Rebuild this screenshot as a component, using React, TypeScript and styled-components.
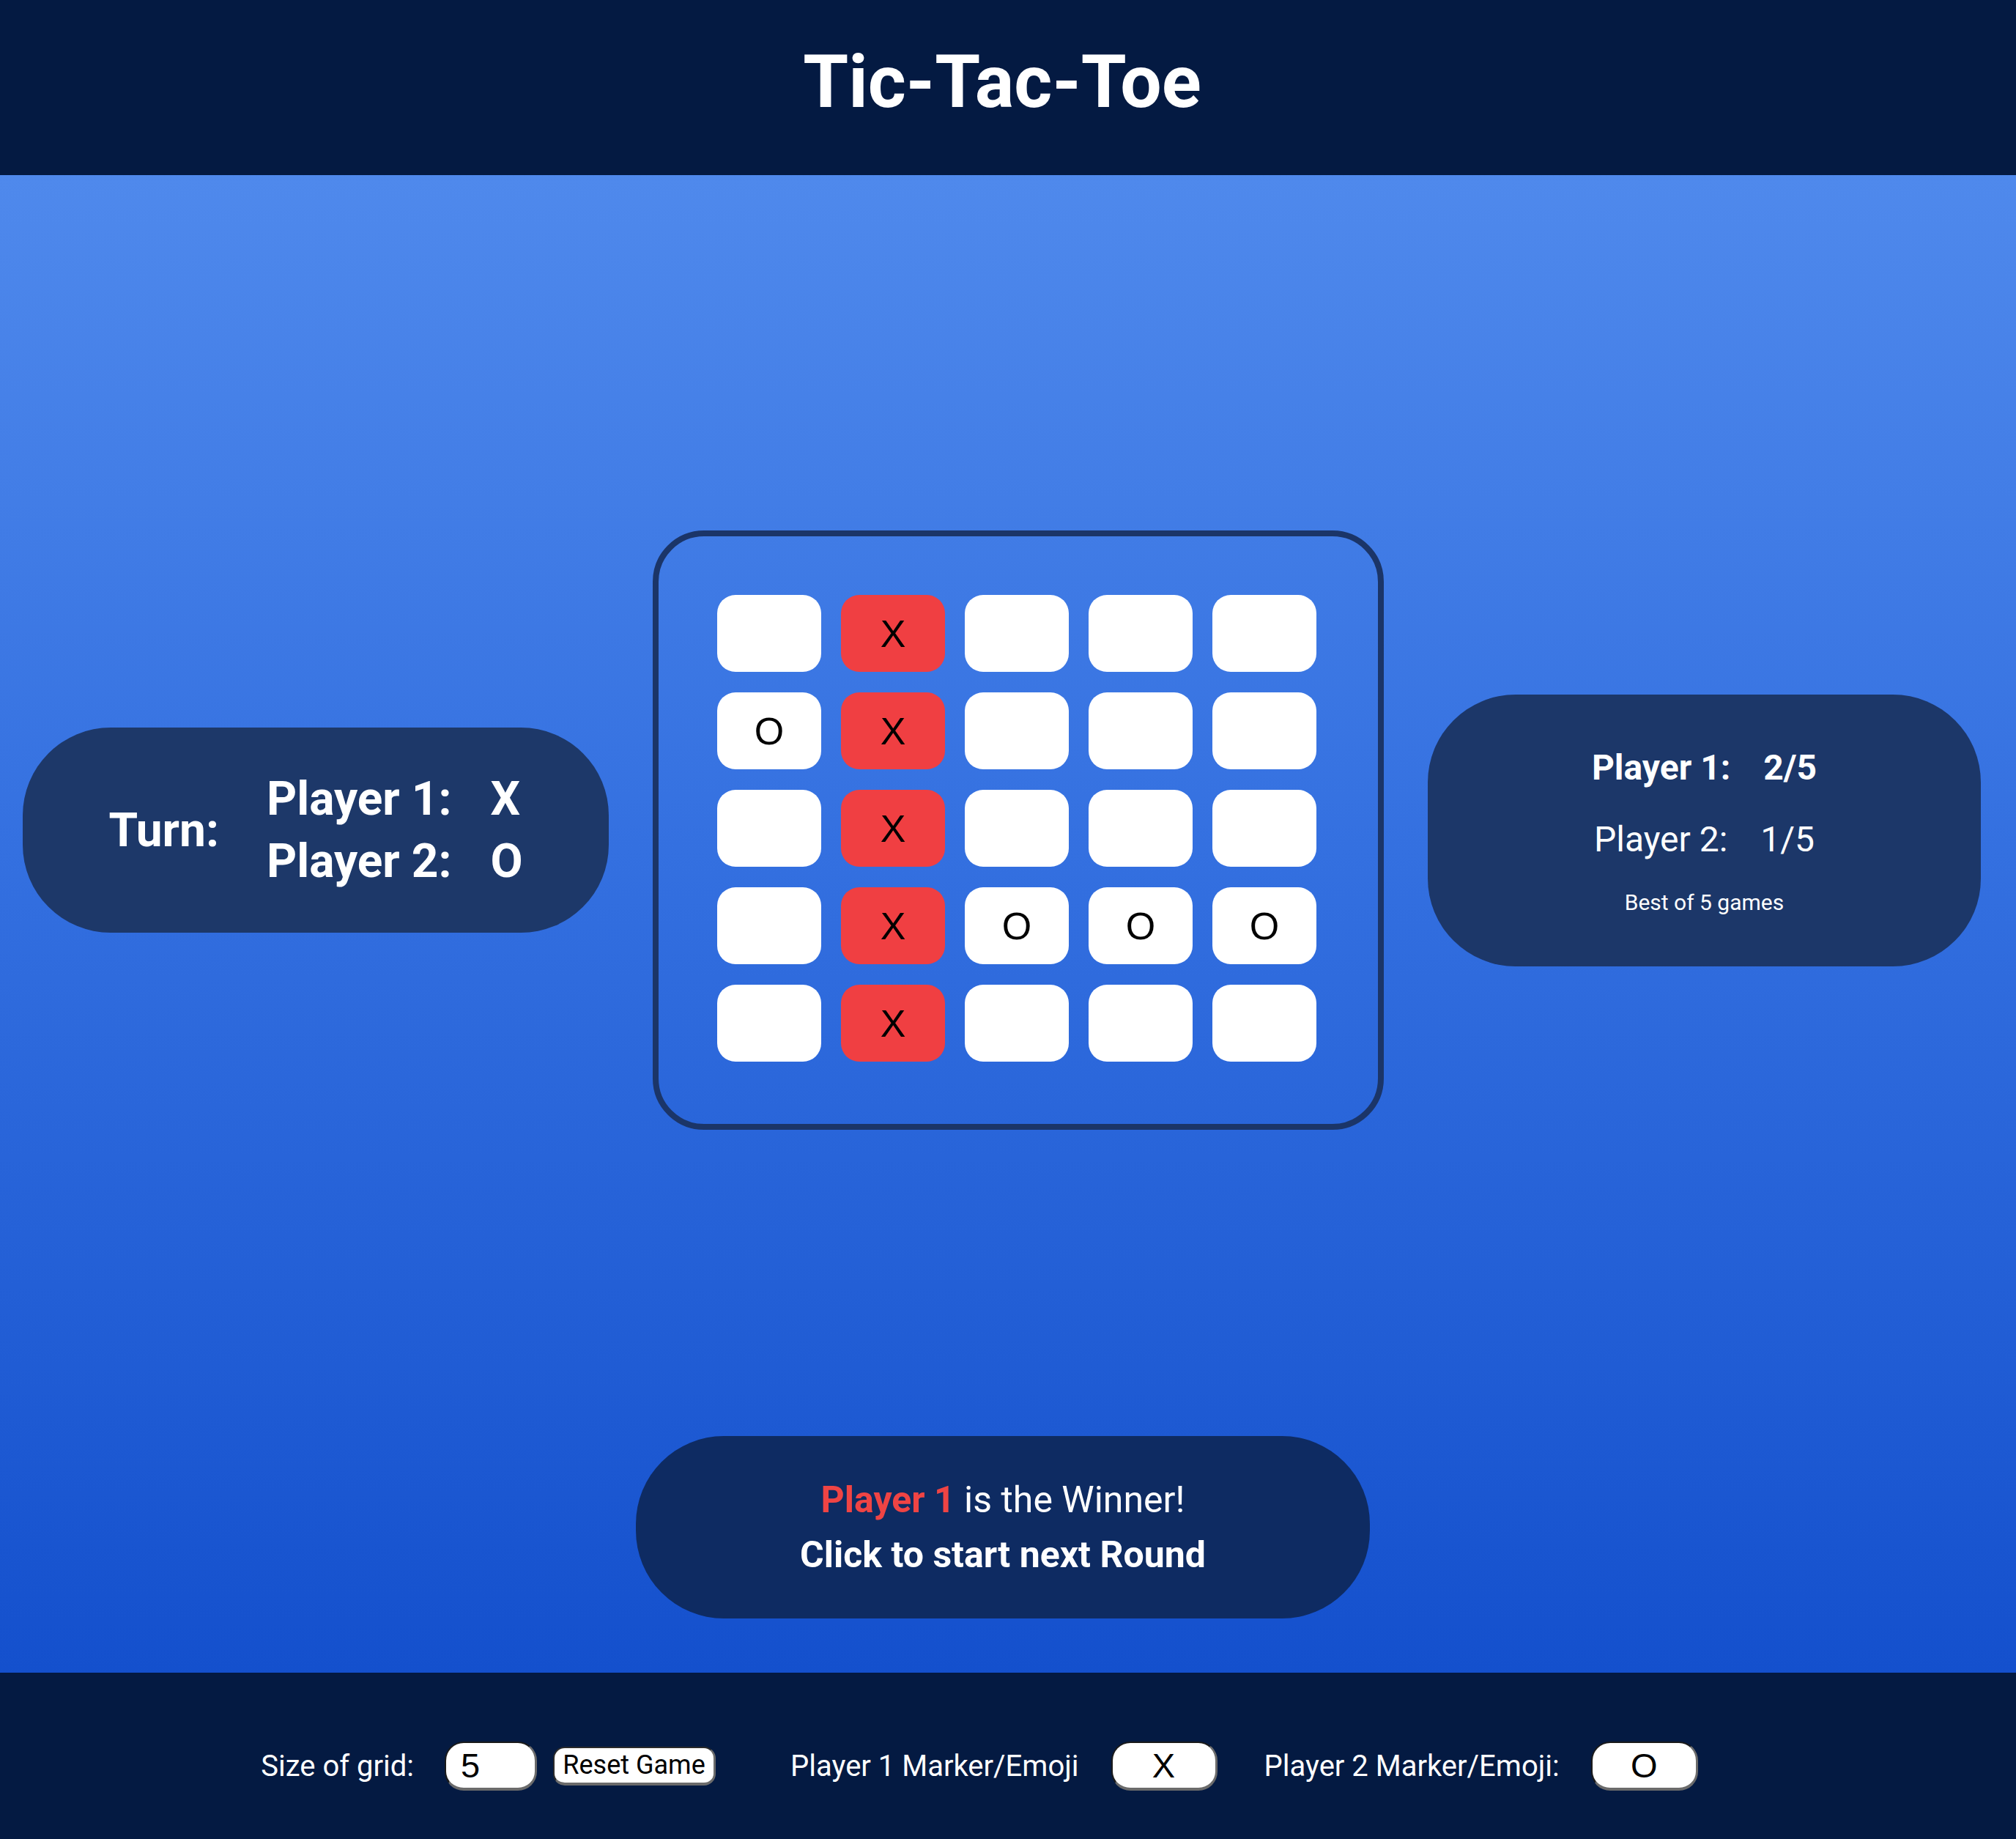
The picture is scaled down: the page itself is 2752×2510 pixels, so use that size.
import React from "react";
import styled, { createGlobalStyle } from "styled-components";

type Mark = "" | "X" | "O";

const board: Mark[][] = [
  ["", "X", "", "", ""],
  ["O", "X", "", "", ""],
  ["", "X", "", "", ""],
  ["", "X", "O", "O", "O"],
  ["", "X", "", "", ""],
];

const winningColumn = 1;

const GlobalStyle = createGlobalStyle`
  html, body {
    margin: 0;
    padding: 0;
  }

  body {
    font-family: Roboto, "Liberation Sans", sans-serif;
    color: #fff;
  }
`;

const Page = styled.div`
  display: flex;
  flex-direction: column;
  width: 2752px;
  height: 2510px;
`;

const Header = styled.header`
  height: 239px;
  box-sizing: border-box;
  padding: 0 16px 16px 0;
  background-color: #041a42;
  display: flex;
  align-items: center;
  justify-content: center;
`;

const Title = styled.h1`
  margin: 0;
  font-size: 100px;
  font-weight: 700;
  color: #fff;
`;

const Main = styled.main`
  height: 2044px;
  box-sizing: border-box;
  padding-top: 485px;
  background: linear-gradient(180deg, #4f89ec 0%, #3470e0 45%, #1450cd 100%);
  display: flex;
  flex-direction: column;
  align-items: center;
`;

const GameRow = styled.div`
  align-self: stretch;
  display: flex;
  align-items: center;
  gap: 60px;
  padding-left: 31px;
`;

const Panel = styled.div<{ $width: number; $height: number; $bg?: string }>`
  width: ${(p) => p.$width}px;
  height: ${(p) => p.$height}px;
  box-sizing: border-box;
  border-radius: 120px;
  background-color: ${(p) => p.$bg ?? "#1d3869"};
  display: flex;
  align-items: center;
  justify-content: center;
`;

const WinnerPanel = styled(Panel)`
  margin-top: 418px;
  margin-right: 14px;
`;

const TurnLabel = styled.div`
  font-size: 64px;
  font-weight: 700;
  margin-right: 65px;
`;

const TurnList = styled.div`
  display: grid;
  grid-template-columns: auto auto;
  column-gap: 53px;
  font-size: 64px;
  font-weight: 700;
  line-height: 85px;
`;

const Board = styled.div`
  width: 998px;
  height: 818px;
  box-sizing: border-box;
  border: 8px solid #1b3568;
  border-radius: 70px;
  padding: 80px 0 0 80px;
  display: grid;
  grid-template-columns: repeat(5, 142px);
  grid-auto-rows: 105px;
  column-gap: 27px;
  row-gap: 28px;
  align-content: start;
`;

const Cell = styled.div<{ $win: boolean }>`
  border-radius: 25px;
  background-color: ${(p) => (p.$win ? "#f03f42" : "#ffffff")};
  color: #000;
  font-family: "Liberation Sans", Arial, sans-serif;
  font-size: 52px;
  display: flex;
  align-items: center;
  justify-content: center;
`;

const ScoreBox = styled.div`
  display: flex;
  flex-direction: column;
  align-items: center;
`;

const ScoreLine = styled.div<{ $bold?: boolean }>`
  font-size: 48px;
  line-height: 98px;
  font-weight: ${(p) => (p.$bold ? 700 : 400)};
`;

const ScoreValue = styled.span`
  margin-left: 45px;
`;

const BestOf = styled.div`
  font-size: 30px;
  line-height: 73px;
`;

const WinnerBox = styled.div`
  text-align: center;
  font-size: 50px;
  line-height: 75px;
`;

const WinnerName = styled.span`
  color: #ef4444;
  font-weight: 700;
`;

const NextRound = styled.div`
  font-weight: 700;
`;

const Footer = styled.footer`
  height: 227px;
  box-sizing: border-box;
  padding: 27px 78px 0 0;
  background-color: #041a42;
  display: flex;
  align-items: center;
  justify-content: center;
`;

const Group = styled.div<{ $gap: number; $after?: number }>`
  display: flex;
  align-items: center;
  gap: ${(p) => p.$gap}px;
  margin-right: ${(p) => p.$after ?? 0}px;
`;

const Label = styled.label`
  font-size: 40px;
  color: #fff;
`;

const TextInput = styled.input<{ $width: number; $center?: boolean }>`
  width: ${(p) => p.$width}px;
  height: 67px;
  box-sizing: border-box;
  padding: 0 ${(p) => (p.$center ? 0 : 20)}px;
  border-style: solid;
  border-width: 2px 3px 4px 2px;
  border-color: #1a1a1a #6b6b6b #6b6b6b #1a1a1a;
  border-radius: 26px;
  background: #fff;
  color: #000;
  font-family: "Liberation Sans", Arial, sans-serif;
  font-size: 47px;
  text-align: ${(p) => (p.$center ? "center" : "left")};
  outline: none;
`;

const ResetButton = styled.button`
  width: 222px;
  height: 53px;
  box-sizing: border-box;
  padding: 0;
  border-style: solid;
  border-width: 2px 3px 4px 2px;
  border-color: #2a2a2a #6b6b6b #6b6b6b #2a2a2a;
  border-radius: 16px;
  background: #fff;
  color: #000;
  font-family: Roboto, sans-serif;
  font-size: 36px;
  cursor: pointer;
`;

const App: React.FC = () => {
  return (
    <Page>
      <GlobalStyle />
      <Header>
        <Title>Tic-Tac-Toe</Title>
      </Header>
      <Main>
        <GameRow>
          <Panel $width={800} $height={280}>
            <TurnLabel>Turn:</TurnLabel>
            <TurnList>
              <span>Player 1:</span>
              <span>X</span>
              <span>Player 2:</span>
              <span>O</span>
            </TurnList>
          </Panel>
          <Board>
            {board.map((row, r) =>
              row.map((mark, c) => (
                <Cell key={`${r}-${c}`} $win={c === winningColumn}>
                  {mark}
                </Cell>
              ))
            )}
          </Board>
          <Panel $width={755} $height={371} $bg="#1c3769">
            <ScoreBox>
              <ScoreLine $bold>
                Player 1:<ScoreValue>2/5</ScoreValue>
              </ScoreLine>
              <ScoreLine>
                Player 2:<ScoreValue>1/5</ScoreValue>
              </ScoreLine>
              <BestOf>Best of 5 games</BestOf>
            </ScoreBox>
          </Panel>
        </GameRow>
        <WinnerPanel $width={1002} $height={249} $bg="#0e2b62">
          <WinnerBox>
            <div>
              <WinnerName>Player 1</WinnerName> is the Winner!
            </div>
            <NextRound>Click to start next Round</NextRound>
          </WinnerBox>
        </WinnerPanel>
      </Main>
      <Footer>
        <Group $gap={42} $after={102}>
          <Label>Size of grid:</Label>
          <Group $gap={22}>
            <TextInput $width={126} defaultValue="5" />
            <ResetButton>Reset Game</ResetButton>
          </Group>
        </Group>
        <Group $gap={44} $after={64}>
          <Label>Player 1 Marker/Emoji</Label>
          <TextInput $width={145} $center defaultValue="X" />
        </Group>
        <Group $gap={43}>
          <Label>Player 2 Marker/Emoji:</Label>
          <TextInput $width={146} $center defaultValue="O" />
        </Group>
      </Footer>
    </Page>
  );
};

export default App;
